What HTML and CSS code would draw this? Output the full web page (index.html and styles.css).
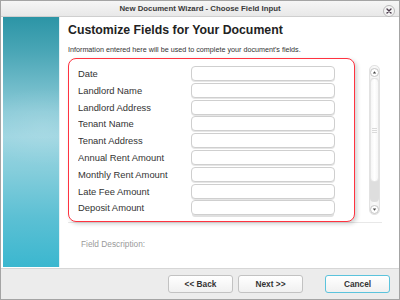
FILE: index.html
```html
<!DOCTYPE html>
<html lang="en">
<head>
    <meta charset="UTF-8">
    <title>New Document Wizard - Choose Field Input</title>
    <link rel="stylesheet" href="styles.css">
</head>
<body>
    <div class="window">
        <div class="title-bar">
            <span class="title">New Document Wizard - Choose Field Input</span>
            <span class="close-btn">
                <svg width="12" height="12" viewBox="0 0 12 12">
                    <circle cx="6" cy="6" r="5.5" fill="#f4f4f4" stroke="#b8b8b8"/>
                    <path d="M4 4 L8 8 M8 4 L4 8" stroke="#4a3a4a" stroke-width="1.4" stroke-linecap="round"/>
                </svg>
            </span>
        </div>

        <div class="main">
            <div class="side-panel"></div>

            <div class="content">
                <h1 class="page-title">Customize Fields for Your Document</h1>
                <p class="intro">Information entered here will be used to complete your document's fields.</p>

                <div class="fields-area">
                    <div class="fields-panel">
                        <div class="fields-list">
                            <label class="field-label">Date</label>
                            <div class="field-input"></div>
                            <label class="field-label">Landlord Name</label>
                            <div class="field-input"></div>
                            <label class="field-label">Landlord Address</label>
                            <div class="field-input"></div>
                            <label class="field-label">Tenant Name</label>
                            <div class="field-input"></div>
                            <label class="field-label">Tenant Address</label>
                            <div class="field-input"></div>
                            <label class="field-label">Annual Rent Amount</label>
                            <div class="field-input"></div>
                            <label class="field-label">Monthly Rent Amount</label>
                            <div class="field-input"></div>
                            <label class="field-label">Late Fee Amount</label>
                            <div class="field-input"></div>
                            <label class="field-label">Deposit Amount</label>
                            <div class="field-input"></div>
                        </div>
                    </div>

                    <div class="scrollbar">
                        <span class="scroll-btn">
                            <svg width="9" height="9" viewBox="0 0 9 9"><circle cx="4.5" cy="4.5" r="4" fill="#fff" stroke="#c4c4c4"/><path d="M2.8 5.4 L4.5 3.3 L6.2 5.4 Z" fill="#444"/></svg>
                        </span>
                        <div class="scroll-track">
                            <div class="scroll-thumb"><span class="grip"></span></div>
                        </div>
                        <span class="scroll-btn">
                            <svg width="9" height="9" viewBox="0 0 9 9"><circle cx="4.5" cy="4.5" r="4" fill="#fff" stroke="#c4c4c4"/><path d="M2.8 3.6 L4.5 5.7 L6.2 3.6 Z" fill="#444"/></svg>
                        </span>
                    </div>
                </div>

                <div class="description">Field Description:</div>
            </div>
        </div>

        <div class="footer">
            <button class="btn">&lt;&lt; Back</button>
            <button class="btn">Next &gt;&gt;</button>
            <button class="btn btn-focus">Cancel</button>
        </div>
    </div>
</body>
</html>
```

FILE: styles.css
```css
body {
    margin: 0;
    font-family: "Liberation Sans", Arial, sans-serif;
    color: #333;
    background: #fff;
}
.window {
    width: 400px;
    height: 300px;
    box-sizing: border-box;
    border: 1px solid #a4a4a4;
    display: flex;
    flex-direction: column;
    background: #fff;
}
.title-bar {
    height: 15px;
    flex-shrink: 0;
    background: linear-gradient(#f6f6f6, #e8e8e8);
    border-bottom: 1px solid #cfcfcf;
    display: flex;
    align-items: center;
    justify-content: center;
    position: relative;
}
.title {
    font-size: 7.8px;
    font-weight: bold;
    color: #3a3a3a;
}
.close-btn {
    position: absolute;
    right: 4px;
    top: 2px;
    width: 12px;
    height: 12px;
}
.main {
    flex: 1;
    display: flex;
    min-height: 0;
}
.side-panel {
    width: 56px;
    margin-left: 2px;
    margin-bottom: 1px;
    flex-shrink: 0;
    border-right: 1px solid #e4f2f5;
    background:
        radial-gradient(ellipse 60px 40px at 40px 110px, rgba(255, 255, 255, 0.12), transparent),
        linear-gradient(#2c95a6 0%, #4aa6b6 14%, #8ccbd8 38%, #9dd5e1 48%, #84cddb 62%, #5cc0d4 80%, #3bb7cf 100%);
}
.content {
    flex: 1;
    padding: 5px 17px 0 8px;
}
.page-title {
    margin: 0;
    font-size: 12.3px;
    line-height: 17px;
    font-weight: bold;
    color: #222;
}
.intro {
    margin: 6px 0 0;
    font-size: 7.2px;
    line-height: 10px;
    color: #333;
}
.fields-area {
    margin-top: 3px;
    height: 164px;
    border-bottom: 1px solid #e8e8e8;
    display: flex;
    align-items: flex-start;
}
.fields-panel {
    width: 287px;
    height: 164px;
    box-sizing: border-box;
    border: 1.5px solid #ff3340;
    border-radius: 8px;
    box-shadow: 2px 2px 4px rgba(0, 0, 0, 0.18);
    background: #fff;
    padding: 7px 0 0 9px;
    overflow: hidden;
    position: relative;
    z-index: 1;
}
.fields-list {
    display: grid;
    grid-template-columns: 113px 144px;
    grid-auto-rows: 15px;
    row-gap: 1.8px;
    height: 152px;
    overflow: hidden;
}
.field-label {
    font-size: 9.4px;
    line-height: 15px;
    color: #333;
}
.field-input {
    border: 1px solid #cfcfcf;
    border-radius: 4px;
    background: #fff;
    box-shadow: 0 1px 0 #e6e6e6;
}
.field-input:last-child {
    box-shadow: 0 3px 0 -1px #e0e0e0;
}
.scrollbar {
    margin: 7px 0 0 14px;
    width: 11px;
    height: 150px;
    display: flex;
    flex-direction: column;
    align-items: center;
    background: linear-gradient(90deg, #f2f2f2, #fafafa, #f2f2f2);
    border: 1px solid #e2e2e2;
    border-radius: 5px;
    box-sizing: border-box;
}
.scroll-btn {
    height: 10px;
    display: flex;
    align-items: center;
    justify-content: center;
    margin-top: 1px;
}
.scroll-track {
    flex: 1;
    width: 9px;
    margin: 1px 0;
    background: #dedede;
    border-radius: 4px;
    display: flex;
    flex-direction: column;
}
.scroll-thumb {
    height: 104px;
    box-sizing: border-box;
    border: 1px solid #e4e4e4;
    border-radius: 4px;
    background: linear-gradient(90deg, #f6f6f6, #fff, #f6f6f6);
    display: flex;
    align-items: center;
    justify-content: center;
}
.grip {
    width: 5px;
    height: 5px;
    background: repeating-linear-gradient(#dadada 0 1px, transparent 1px 2px);
}
.description {
    margin: 16px 0 0 13px;
    font-size: 8.3px;
    color: #9a9a9a;
}
.footer {
    height: 31px;
    flex-shrink: 0;
    background: #ececec;
    border-top: 1px solid #d6d6d6;
    display: flex;
    align-items: flex-start;
    padding: 6px 9px 0 0;
    justify-content: flex-end;
    box-sizing: border-box;
}
.btn {
    width: 65px;
    height: 18px;
    margin-left: 5px;
    border: 1px solid #c2c2c2;
    border-radius: 3px;
    background: linear-gradient(#ffffff, #f0f0f0);
    font-family: "Liberation Sans", Arial, sans-serif;
    font-size: 8.3px;
    font-weight: bold;
    color: #333;
    padding: 0;
}
.btn-focus {
    margin-left: 22px;
    border: 1.5px solid #5bc3dc;
}
```
